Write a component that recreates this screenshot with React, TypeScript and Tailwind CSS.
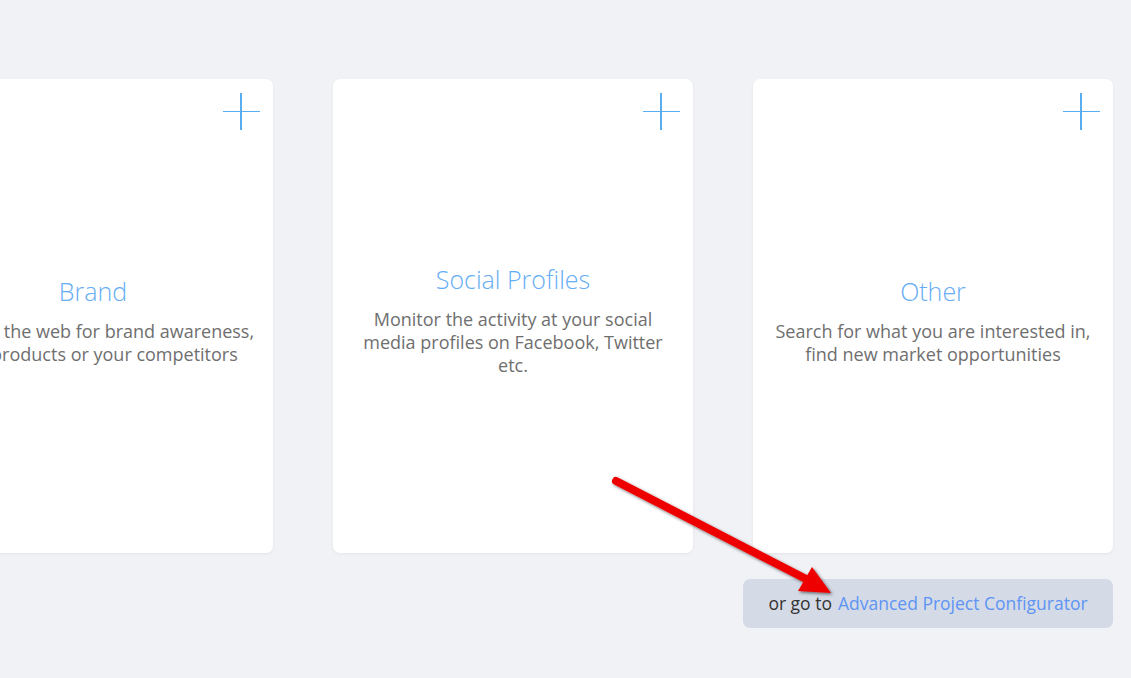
import React from 'react';

type Card = { title: string; text: string[] };

const cards: Card[] = [
  { title: 'Brand', text: ['Monitor the web for brand awareness,', 'your products or your competitors'] },
  { title: 'Social Profiles', text: ['Monitor the activity at your social', 'media profiles on Facebook, Twitter', 'etc.'] },
  { title: 'Other', text: ['Search for what you are interested in,', 'find new market opportunities'] },
];

const Plus = () => (
  <div className="relative w-[37px] h-[37px]">
    <div className="absolute left-[17px] top-0 w-[2px] h-[37px] bg-[#5aaef0]" />
    <div className="absolute left-0 top-[18px] w-[37px] h-[1px] bg-[#5aaef0]" />
  </div>
);

const App: React.FC = () => {
  return (
    <div
      className="relative w-[1131px] h-[678px] overflow-hidden bg-[#f0f2f6] pt-[79px]"
      style={{ fontFamily: '"Open Sans", "Noto Sans", sans-serif' }}
    >
      <div className="flex gap-[60px] ml-[-87px]">
        {cards.map(c => (
          <div
            key={c.title}
            className="relative w-[360px] h-[474px] shrink-0 bg-white rounded-[7px] shadow-[0_1px_3px_rgba(0,0,0,0.06)] flex flex-col items-center justify-center pt-[8px]"
          >
            <div className="absolute top-[14px] right-[13px]">
              <Plus />
            </div>
            <h3 className="text-[25px] font-light text-[#65adf4] leading-[32px] mb-[13px]">{c.title}</h3>
            <p className="text-[18px] text-[#6f6f6f] leading-[23px] text-center whitespace-nowrap">
              {c.text.map((t, i) => (
                <span key={i} className="block">{t}</span>
              ))}
            </p>
          </div>
        ))}
      </div>

      <div className="flex justify-end pr-[18px] mt-[26px]">
        <div className="w-[370px] h-[49px] rounded-[7px] bg-[#d5dbe6] flex items-center justify-center text-[17.5px]">
          <span className="text-[#333]">or go to</span>
          <span className="ml-[6px] text-[#5e94f4]">Advanced Project Configurator</span>
        </div>
      </div>

      {/* annotation arrow */}
      <svg className="absolute left-0 top-0 pointer-events-none" width="1131" height="678">
        <defs>
          <filter id="sh" x="-20%" y="-20%" width="140%" height="140%">
            <feDropShadow dx="1.5" dy="1.5" stdDeviation="1.5" floodColor="#000" floodOpacity="0.55" />
          </filter>
        </defs>
        <g filter="url(#sh)">
          <line x1="616" y1="481" x2="808" y2="580" stroke="#ee0000" strokeWidth="8" strokeLinecap="round" />
          <polygon points="831,593 798,591 812,567" fill="#ee0000" />
        </g>
      </svg>
    </div>
  );
};

export default App;
